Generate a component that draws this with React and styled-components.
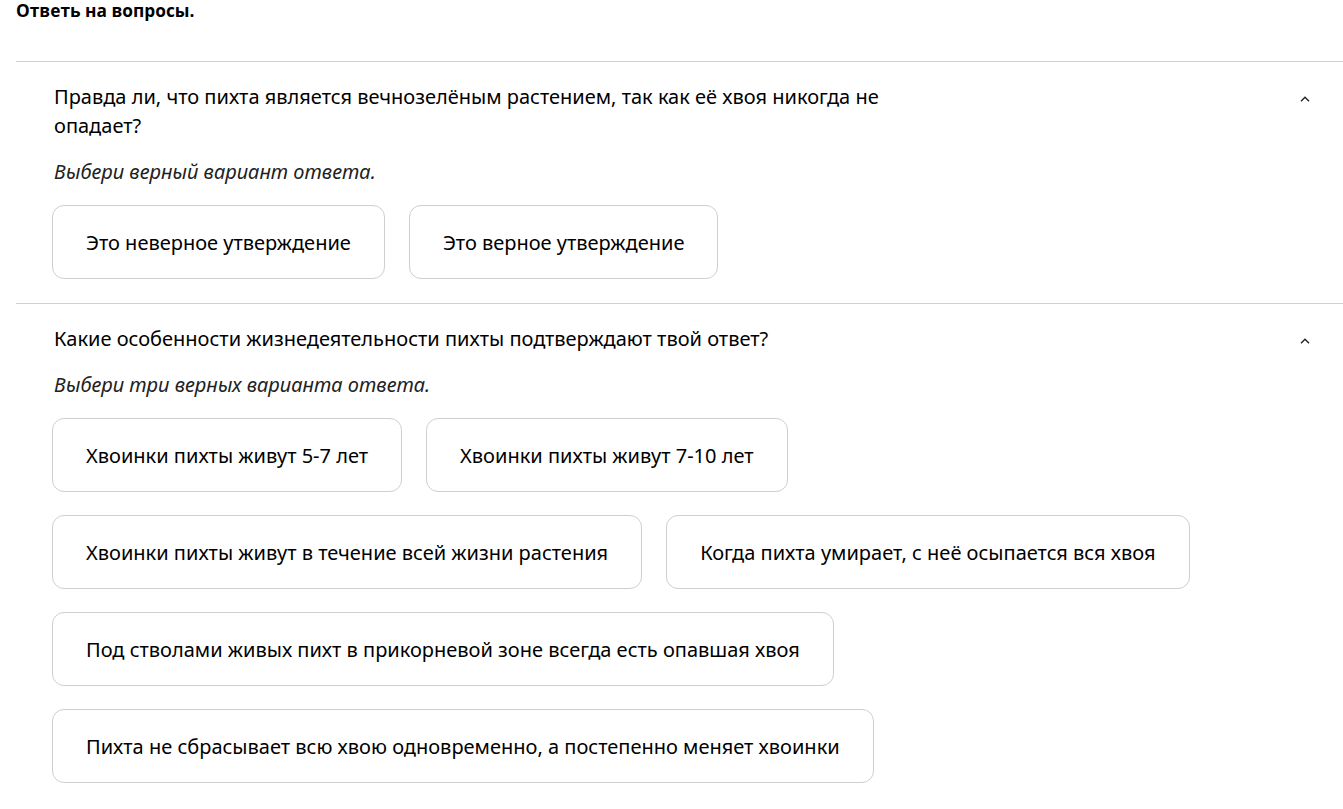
import React from 'react';
import styled, { createGlobalStyle } from 'styled-components';

const questions = [
    {
        text: 'Правда ли, что пихта является вечнозелёным растением, так как её хвоя никогда не опадает?',
        hint: 'Выбери верный вариант ответа.',
        options: ['Это неверное утверждение', 'Это верное утверждение'],
    },
    {
        text: 'Какие особенности жизнедеятельности пихты подтверждают твой ответ?',
        hint: 'Выбери три верных варианта ответа.',
        options: [
            'Хвоинки пихты живут 5-7 лет',
            'Хвоинки пихты живут 7-10 лет',
            'Хвоинки пихты живут в течение всей жизни растения',
            'Когда пихта умирает, с неё осыпается вся хвоя',
            'Под стволами живых пихт в прикорневой зоне всегда есть опавшая хвоя',
            'Пихта не сбрасывает всю хвою одновременно, а постепенно меняет хвоинки',
        ],
    },
];

export default function App() {
    return (
        <Page>
            <GlobalStyle />
            <Title>Ответь на вопросы.</Title>
            {questions.map((q, i) => (
                <Section key={i}>
                    <Head>
                        <Question>{q.text}</Question>
                        <Chevron viewBox="0 0 10 6">
                            <path d="M1 5.2 L5 1.2 L9 5.2" />
                        </Chevron>
                    </Head>
                    <Hint>{q.hint}</Hint>
                    <Options>
                        {q.options.map((o) => (
                            <Option key={o}>{o}</Option>
                        ))}
                    </Options>
                </Section>
            ))}
        </Page>
    );
}

const GlobalStyle = createGlobalStyle`
    body {
        margin: 0;
        background: #fff;
        color: #000;
        font-family: "Noto Sans", "Open Sans", sans-serif;
    }
`;

const Page = styled.div`
    padding: 0 0 0 16px;
`;

const Title = styled.h1`
    margin: 0;
    padding-top: 1px;
    height: 60px;
    font-family: "Open Sans", sans-serif;
    font-size: 17.3px;
    font-weight: 700;
    line-height: 20px;
    border-bottom: 1px solid #d0d0d0;
`;

const Section = styled.section`
    padding: 20px 0 24px 38px;
    border-bottom: 1px solid #d0d0d0;

    &:last-child {
        border-bottom: none;
    }
`;

const Head = styled.div`
    display: flex;
    justify-content: space-between;
    align-items: flex-start;
    padding-right: 33px;
`;

const Question = styled.p`
    margin: 0;
    max-width: 900px;
    font-size: 20px;
    line-height: 29px;
`;

const Chevron = styled.svg`
    width: 10px;
    height: 6px;
    margin-top: 14px;
    fill: none;
    stroke: #222;
    stroke-width: 1.4;
`;

const Hint = styled.p`
    margin: 18px 0 0;
    font-size: 20px;
    font-style: italic;
    line-height: 28px;
    color: #222;
`;

const Options = styled.div`
    display: flex;
    flex-wrap: wrap;
    row-gap: 23px;
    column-gap: 24px;
    margin: 19px 0 0 -2px;
    max-width: 1160px;
`;

const Option = styled.div`
    display: flex;
    align-items: center;
    height: 74px;
    box-sizing: border-box;
    padding: 0 33px;
    border: 1px solid #cfcfcf;
    border-radius: 12px;
    font-size: 20px;
    white-space: nowrap;
`;
